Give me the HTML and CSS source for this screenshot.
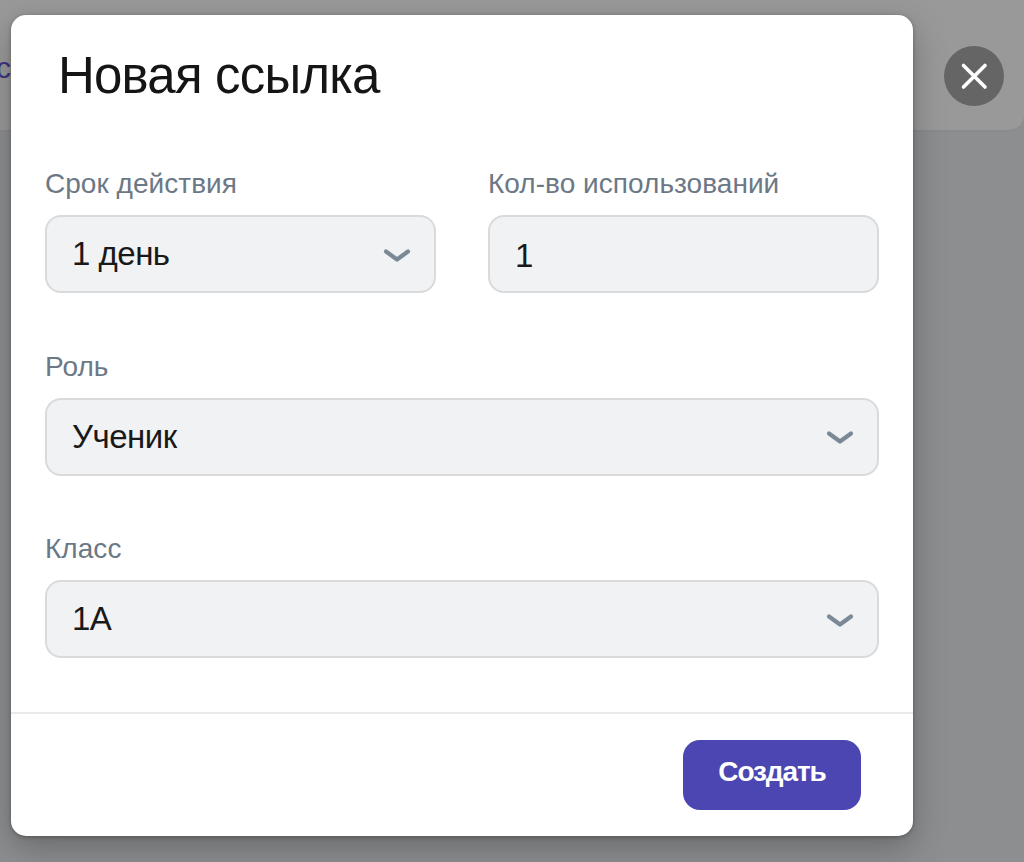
FILE: index.html
```html
<!DOCTYPE html>
<html lang="ru">
<head>
<meta charset="utf-8">
<title>Новая ссылка</title>
<link rel="stylesheet" href="styles.css">
</head>
<body>
<header class="topbar"><span class="topbar-link">с</span></header>
<div class="overlay">
  <section class="dialog" role="dialog" aria-labelledby="title">
    <h1 class="title" id="title">Новая ссылка</h1>
    <form class="form">
      <div class="field">
        <label class="label">Срок действия</label>
        <div class="control"><span class="value">1 день</span><svg class="chevron" viewBox="0 0 28 16"><path d="M3 3.5 14 11.5 25 3.5"/></svg></div>
      </div>
      <div class="field">
        <label class="label">Кол-во использований</label>
        <div class="control control-input"><span class="value">1</span></div>
      </div>
      <div class="field wide">
        <label class="label">Роль</label>
        <div class="control"><span class="value">Ученик</span><svg class="chevron" viewBox="0 0 28 16"><path d="M3 3.5 14 11.5 25 3.5"/></svg></div>
      </div>
      <div class="field wide">
        <label class="label">Класс</label>
        <div class="control"><span class="value">1А</span><svg class="chevron" viewBox="0 0 28 16"><path d="M3 3.5 14 11.5 25 3.5"/></svg></div>
      </div>
    </form>
    <footer class="footer"><button class="submit" type="button">Создать</button></footer>
  </section>
  <button class="close" type="button" aria-label="Закрыть"><svg viewBox="0 0 60 60"><path d="M19.5 19.5 41 41M41 19.5 19.5 41"/></svg></button>
</div>
</body>
</html>
```
FILE: styles.css
```css
* { box-sizing: border-box; }
body {
  margin: 0;
  height: 862px;
  overflow: hidden;
  background: #8d8e90;
  font-family: "Liberation Sans", Arial, sans-serif;
}
.topbar {
  height: 132px;
  padding-top: 50px;
  background: #999;
  border-bottom: 2px solid #8a8b8d;
  border-radius: 0 0 16px 0;
}
.topbar-link {
  display: block;
  margin-left: -4px;
  color: #3c3584;
  font-size: 30px;
  line-height: 36px;
}
.overlay {
  position: absolute;
  inset: 0;
  display: flex;
  align-items: flex-start;
  gap: 31px;
  padding: 15px 0 0 11px;
}
.dialog {
  display: flex;
  flex-direction: column;
  width: 902px;
  height: 821px;
  background: #fff;
  border-radius: 15px;
  box-shadow: 0 12px 34px rgba(0, 0, 0, .26), 0 1px 4px rgba(0, 0, 0, .28);
}
.title {
  margin: 0;
  padding: 31px 0 0 47px;
  height: 151px;
  font-size: 51px;
  font-weight: 400;
  line-height: 60px;
  letter-spacing: -.8px;
  color: #151515;
}
.form {
  display: grid;
  grid-template-columns: 391px 391px;
  column-gap: 52px;
  row-gap: 55.5px;
  padding: 0 34px;
  height: 546px;
  align-content: start;
}
.wide { grid-column: span 2; }
.field { height: 127px; }
.label {
  display: block;
  height: 34px;
  margin-bottom: 15px;
  font-size: 28px;
  line-height: 36px;
  letter-spacing: .04px;
  color: #6c7885;
  white-space: nowrap;
}
.control {
  display: flex;
  align-items: center;
  justify-content: space-between;
  height: 78px;
  padding: 0 23px 0 25px;
  border: 2px solid #d8dadb;
  border-radius: 16px;
  background: #f1f2f4;
}
.control-input { padding-top: 3px; }
.value {
  font-size: 33px;
  line-height: 40px;
  letter-spacing: -.5px;
  color: #191919;
}
.chevron { width: 28px; height: 16px; margin-top: 3px; }
.chevron path {
  fill: none;
  stroke: #7b8896;
  stroke-width: 4.2;
  stroke-linecap: round;
  stroke-linejoin: round;
}
.footer {
  display: flex;
  justify-content: flex-end;
  height: 124px;
  padding: 26px 52px 0 0;
  border-top: 2px solid #e9eaeb;
}
.submit {
  width: 178px;
  height: 70px;
  padding: 0 0 7px;
  border: 0;
  border-radius: 17px;
  background: #4b46b2;
  color: #fff;
  font-family: inherit;
  font-size: 28px;
  font-weight: 700;
  letter-spacing: -1.1px;
}
.close {
  width: 60px;
  height: 60px;
  margin-top: 31px;
  padding: 0;
  border: 0;
  border-radius: 50%;
  background: #656565;
}
.close svg { display: block; width: 60px; height: 60px; }
.close path {
  fill: none;
  stroke: #fff;
  stroke-width: 3.6;
  stroke-linecap: round;
}
```
